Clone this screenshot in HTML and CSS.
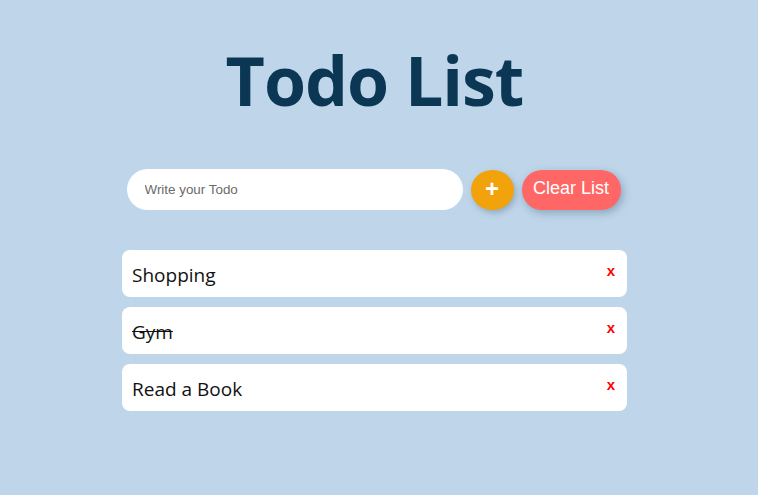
FILE: index.html
```html
<!DOCTYPE html>
<html lang="en">
<head>
<meta charset="utf-8">
<title>Todo List</title>
<link rel="stylesheet" href="styles.css">
</head>
<body>
<main class="app">
  <h1 class="title">Todo List</h1>
  <form class="form">
    <input class="input" type="text" placeholder="Write your Todo">
    <button class="add" type="button">+</button>
    <button class="clear" type="button">Clear List</button>
  </form>
  <ul class="list">
    <li class="item"><span class="text">Shopping</span><button class="del" type="button">x</button></li>
    <li class="item"><span class="text done">Gym</span><button class="del" type="button">x</button></li>
    <li class="item"><span class="text">Read a Book</span><button class="del" type="button">x</button></li>
  </ul>
</main>
</body>
</html>
```
FILE: styles.css
```css
html, body {
  margin: 0;
  padding: 0;
  background: #bfd6ea;
  height: 100%;
}
body {
  font-family: "Open Sans", "Noto Sans", sans-serif;
}
.app {
  display: flex;
  flex-direction: column;
  align-items: center;
  padding-right: 9px;
}
.title {
  margin: 30px 0 0;
  font-size: 68px;
  font-weight: 700;
  color: #0b3654;
  line-height: 100px;
  letter-spacing: -1px;
}
.form {
  display: flex;
  align-items: center;
  gap: 8px;
  margin-top: 39px;
  margin-right: 2px;
}
.input {
  width: 336px;
  height: 41px;
  box-sizing: border-box;
  border: none;
  border-radius: 21px;
  padding: 0 18px;
  font-family: "Liberation Sans", Arial, sans-serif;
  font-size: 13.4px;
  outline: none;
  background: #fff;
}
.input::placeholder {
  color: #6b6b6b;
}
.add {
  width: 43px;
  height: 40px;
  border: none;
  border-radius: 50%;
  background: #f2a20a;
  color: #fff;
  font-family: "Liberation Sans", Arial, sans-serif;
  font-size: 24px;
  font-weight: 700;
  line-height: 1;
  padding: 0 0 2px;
  box-shadow: 2px 3px 6px rgba(60, 90, 120, 0.35);
}
.clear {
  width: 99px;
  height: 40px;
  border: none;
  border-radius: 20px;
  background: #ff6766;
  color: #fff;
  font-family: "Liberation Sans", Arial, sans-serif;
  font-size: 18px;
  padding: 0 0 2px;
  box-shadow: 2px 3px 8px rgba(60, 90, 120, 0.4);
}
.list {
  list-style: none;
  margin: 40px 0 0;
  padding: 0;
  width: 505px;
  display: flex;
  flex-direction: column;
  gap: 10px;
}
.item {
  display: flex;
  align-items: flex-start;
  justify-content: space-between;
  height: 47px;
  box-sizing: border-box;
  background: #fff;
  border-radius: 8px;
  padding: 2px 12px 0 10px;
}
.text {
  font-size: 19px;
  color: #111;
  line-height: 47px;
}
.done {
  text-decoration: line-through;
}
.del {
  border: none;
  background: none;
  color: #ff0000;
  font-family: "Liberation Sans", Arial, sans-serif;
  font-weight: 700;
  font-size: 15px;
  padding: 0;
  margin-top: 11px;
  line-height: 1;
}
```
